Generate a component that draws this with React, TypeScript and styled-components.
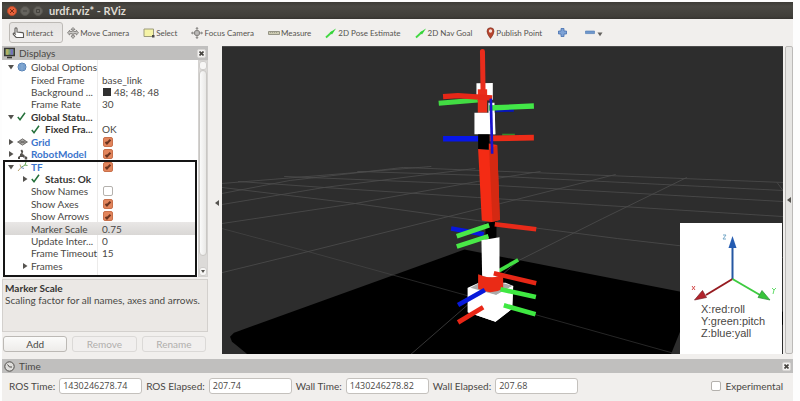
import React from 'react';
import styled, { createGlobalStyle } from 'styled-components';

const GlobalStyle = createGlobalStyle`
  *, *::before, *::after { box-sizing: border-box; }
  body { margin: 0; background: #fdfdfd; color: #4a4845; font-family: Lato, "Open Sans", sans-serif; font-size: 10px; }
  button, input { font: inherit; color: inherit; }
`;

const Window = styled.div`
  display: flex;
  flex-direction: column;
  height: calc(100vh - 2px);
  min-height: 398px;
  margin: 2px 7px 0 2px;
  background: #f1efed;
`;

const TitleBar = styled.header`
  display: flex;
  align-items: center;
  flex: none;
  gap: 3px;
  height: 17px;
  padding: 0 5px;
  background: linear-gradient(#3d3b36, #4a4843 25%, #403e39 85%, #35332f);
`;

const WindowButton = styled.button<{ $close?: boolean }>`
  display: grid;
  place-items: center;
  width: 10px;
  height: 10px;
  padding: 0;
  border: 1px solid ${p => (p.$close ? '#b5492a' : '#57554f')};
  border-radius: 50%;
  background: ${p => (p.$close ? '#e7623b' : '#66645e')};
  color: ${p => (p.$close ? '#7c2a12' : '#45433e')};
  svg { display: block; }
`;

const WindowTitle = styled.h1`
  margin: 0 0 0 3px;
  color: #dfdbd2;
  font-size: 11px;
  line-height: 14px;
  font-weight: 700;
`;

const ToolBar = styled.nav`
  display: flex;
  align-items: center;
  flex: none;
  height: 27px;
  padding: 0 7px;
  font-size: 8px;
`;

const ToolButton = styled.button<{ $active?: boolean; $wide?: boolean }>`
  display: flex;
  align-items: center;
  gap: 1px;
  height: 21px;
  padding: 0 ${p => (p.$active ? '9px 0 2px' : p.$wide ? '8px' : '6px')};
  margin-right: ${p => (p.$active ? '-3px' : '0')};
  border: 1px solid ${p => (p.$active ? '#bdbab6' : 'transparent')};
  border-radius: 3px;
  background: ${p => (p.$active ? 'linear-gradient(#e6e4e2, #eeeceb)' : 'transparent')};
  color: #55534f;
  white-space: nowrap;
  svg { flex: none; }
`;

const Workspace = styled.main`
  display: flex;
  flex: 1;
  min-height: 0;
`;

const SidePanel = styled.section`
  display: flex;
  flex-direction: column;
  flex: 0 0 206px;
  min-width: 0;
`;

const PanelHeader = styled.div`
  display: flex;
  align-items: center;
  flex: none;
  gap: 4px;
  height: 14px;
  padding: 0 2px;
  background: #c0bfbe;
`;

const PanelTitle = styled.h2`
  flex: 1;
  margin: 0;
  font-size: 10px;
  line-height: 14px;
  font-weight: 400;
`;

const CloseButton = styled.button`
  display: grid;
  place-items: center;
  width: 9px;
  height: 9px;
  padding: 0;
  border: 1px solid #d9d7d5;
  border-radius: 2px;
  background: #f3f2f1;
`;

const TreeArea = styled.div`
  display: flex;
  flex: 1;
  min-height: 0;
`;

const Tree = styled.div`
  display: flex;
  flex-direction: column;
  flex: 1;
  min-width: 0;
  padding-top: 1px;
  background: linear-gradient(90deg, #fff 95px, #ecebea 95px, #ecebea 96px, #fff 96px);
`;

const RowGroup = styled.div<{ $rows: number; $framed?: boolean }>`
  display: grid;
  grid-template-rows: repeat(${p => p.$rows}, minmax(0, 1fr));
  flex: ${p => p.$rows};
  min-height: 0;
  padding-bottom: ${p => (p.$framed ? '5px' : '0')};
  margin: 0 1px;
  outline: ${p => (p.$framed ? '2px solid #151515' : 'none')};
  outline-offset: -2px;
`;

const Row = styled.div<{ $selected?: boolean }>`
  display: grid;
  grid-template-columns: 95px 1fr;
  align-items: center;
  min-height: 0;
  margin: 0 2px;
  line-height: 12px;
  background: ${p => (p.$selected ? 'linear-gradient(#e9e7e6, #d9d7d5)' : 'transparent')};
`;

const NameCell = styled.div<{ $level: number }>`
  display: flex;
  align-items: center;
  min-width: 0;
  padding-left: ${p => (p.$level ? '14px' : '0')};
`;

const ArrowSlot = styled.span`
  display: grid;
  place-items: center;
  flex: 0 0 12px;
`;

const IconSlot = styled.span`
  display: flex;
  align-items: center;
  flex: 0 0 14px;
`;

const Name = styled.span<{ $tone?: 'bold' | 'link' }>`
  white-space: nowrap;
  font-weight: ${p => (p.$tone ? 700 : 400)};
  color: ${p => (p.$tone === 'link' ? '#3b74cc' : p.$tone === 'bold' ? '#363432' : 'inherit')};
`;

const ValueCell = styled.div`
  display: flex;
  align-items: center;
  gap: 3px;
  padding-left: 2px;
  white-space: nowrap;
`;

const Swatch = styled.span`
  width: 8px;
  height: 8px;
  margin-left: 1px;
  background: #303030;
`;

const Check = styled.input<{ $inset?: boolean }>`
  appearance: none;
  display: grid;
  place-items: center;
  flex: none;
  width: 10px;
  height: 10px;
  margin: 0 0 0 ${p => (p.$inset ? '1px' : '0')};
  border: 1px solid #b4b1ad;
  border-radius: 2px;
  background: #fff;
  &:checked { border-color: #c9714c; background: #e2855c; }
  &:checked::before {
    content: '';
    width: 6px;
    height: 3px;
    border: solid #6b3420;
    border-width: 0 0 2px 2px;
    rotate: -45deg;
  }
`;

const ScrollBar = styled.div`
  display: flex;
  flex-direction: column;
  align-items: center;
  flex: 0 0 10px;
  background: #dcdad8;
  border: 1px solid #d4d2d0;
`;

const ScrollEnd = styled.button`
  display: grid;
  place-items: center;
  width: 8px;
  height: 9px;
  padding: 0;
  border: 1px solid #cfcdcb;
  border-radius: 3px;
  background: #f7f6f5;
`;

const Thumb = styled.div<{ $share: number }>`
  width: 8px;
  flex: ${p => p.$share};
  border: 1px solid #c9c7c4;
  border-radius: 4px;
  background: linear-gradient(90deg, #fafafa, #e9e8e6);
`;

const ScrollGap = styled.div`flex: 6;`;

const Description = styled.div`
  flex: none;
  height: 53px;
  margin-top: 2px;
  padding: 2px 2px;
  border: 1px solid #d3d0cd;
  background: #ebe8e5;
  line-height: 12px;
  white-space: nowrap;
  p { margin: 0; }
`;

const DescriptionTitle = styled.h3`
  margin: 0;
  font-size: 10px;
  line-height: 12px;
  color: #363432;
`;

const ButtonRow = styled.div`
  display: grid;
  grid-template-columns: repeat(3, 1fr);
  flex: none;
  gap: 5px;
  padding: 4px 2px 7px 1px;
`;

const PushButton = styled.button`
  height: 16px;
  padding: 0;
  border: 1px solid #bcb9b5;
  border-radius: 3px;
  background: linear-gradient(#fbfbfa, #eeecea);
  line-height: 14px;
  &:disabled { color: #b0aeac; border-color: #dbd9d7; background: #f1efee; }
`;

const Splitter = styled.div`
  display: grid;
  align-content: center;
  justify-items: end;
  flex: 0 0 14px;
  padding: 0 3px;
`;

const EdgeHandle = styled.div`
  display: grid;
  place-items: center;
  flex: none;
  width: 8px;
  margin: 0 0 5px 2px;
  border: 1px solid #bcbab8;
  border-radius: 2px;
  background: #e6e5e3;
`;

const Viewport = styled.section`
  position: relative;
  flex: 1;
  min-width: 0;
  margin-bottom: 5px;
  border-top: 1px solid #4b4b4b;
  background: #2d2d2d;
`;

const Scene = styled.svg`
  position: absolute;
  inset: 0;
  width: 100%;
  height: 100%;
`;

const Legend = styled.figure`
  position: absolute;
  right: 1px;
  bottom: 0;
  width: 102px;
  margin: 0;
  padding: 9px 0 15px;
  background: #fff;
  svg { display: block; }
`;

const LegendText = styled.figcaption`
  padding-left: 21px;
  font: 11px/12px "Liberation Sans", Arial, sans-serif;
`;

const TimeForm = styled.form`
  display: flex;
  align-items: center;
  flex: none;
  gap: 4px;
  height: 28px;
  padding: 0 10px 3px 7px;
`;

const FieldInput = styled.input`
  width: 83px;
  min-width: 0;
  height: 16px;
  padding: 0 3px;
  border: 1px solid #c4c1bd;
  border-radius: 3px;
  background: #fff;
  font-family: "Open Sans", sans-serif;
  font-size: 9px;
`;

const FieldLabel = styled.label`white-space: nowrap;`;
const Spacer = styled.div`flex: 1;`;

const Triangle = ({ open }: { open?: boolean }) => (
  <svg width="6" height="6" viewBox="0 0 6 6" fill="#55534f"><path d={open ? 'M0 1h6L3 5.5z' : 'M1 0v6L5.5 3z'} /></svg>
);
const HandleArrow = () => <svg width="4" height="6" viewBox="0 0 4 6"><path d="M4 0v6L0 3z" fill="#55534f" /></svg>;
const CloseMark = () => <svg width="5" height="5" viewBox="0 0 5 5"><path d="M.5.5l4 4m0-4l-4 4" stroke="#45433f" strokeWidth="1.6" /></svg>;
const Tick = () => <svg width="9" height="9" viewBox="0 0 9 9"><path d="M.8 5L3 7.7 8 .8" fill="none" stroke="#24703a" strokeWidth="1.5" /></svg>;

const icons: Record<string, React.ReactNode> = {
  hand: <svg width="13" height="12" viewBox="0 0 13 12"><path d="M3 6V1.7a1 1 0 012 0V5l5.5.6q1 .2 1 1.2v3.7H4.2L1.3 7.4Q.8 6.2 2 6.1l2 1.4" fill="#fff" stroke="#5b5956" strokeWidth="1.1" /></svg>,
  move: <svg width="12" height="12" viewBox="0 0 12 12"><path d="M6 .5l2 2H6.7v2h2.6V3.2L11.5 6 9.3 8V6.6H6.7V9H8l-2 2.5L4 9h1.3V6.6H2.7V8L.5 6l2.2-2.8v1.3h2.6v-2H4z" fill="#c9c8c5" stroke="#777572" strokeWidth=".8" /></svg>,
  select: <svg width="12" height="12" viewBox="0 0 12 12"><path d="M1 2h9.5v7.5H1z" fill="#f5f3a6" stroke="#9c9b7b" /><path d="M9 8h2.500v2.500H9z" fill="#4b4948" /></svg>,
  focus: <svg width="12" height="12" viewBox="0 0 12 12" stroke="#858380" fill="none"><circle cx="6" cy="6" r="2.7" fill="#bcbab8" /><path d="M6 .3v4M6 7.7v4M.3 6h4M7.7 6h4M4.8 2L6 .7 7.2 2M4.8 10L6 11.3 7.2 10M2 4.8L.7 6 2 7.2M10 4.8L11.3 6 10 7.2" /></svg>,
  measure: <svg width="12" height="12" viewBox="0 0 12 12"><path d="M.5 4.5h11v3H.5z" fill="#cdcbb2" stroke="#969586" /><path d="M2.5 5v1M4.5 5v1M6.5 5v1M8.5 5v1" stroke="#85847a" strokeWidth=".6" /></svg>,
  arrow: <svg width="12" height="12" viewBox="0 0 12 12"><path d="M1 10.5L7 5" stroke="#42d842" strokeWidth="1.8" /><path d="M4.700 5.500L11 1.500 7 7.500z" fill="#36d438" /></svg>,
  pin: <svg width="9" height="12" viewBox="0 0 9 12"><path d="M4.5 11.5Q1 7 1 4.2a3.5 3.5 0 017 0Q8 7 4.5 11.5z" fill="#b8452f" stroke="#7b2c1d" strokeWidth=".6" /><circle cx="4.5" cy="4" r="1.7" fill="#f7ded7" /></svg>,
  plus: <svg width="9" height="9" viewBox="0 0 9 9"><path d="M3 .5h3V3h2.5v3H6v2.5H3V6H.5V3H3z" fill="#7ea2d5" stroke="#456fb0" strokeWidth=".8" /></svg>,
  minus: <svg width="18" height="9" viewBox="0 0 18 9"><path d="M.5 3h9v2.6h-9z" fill="#6f97cc" stroke="#4e78b2" strokeWidth=".6" /><path d="M12.5 4.5h5L15 8.3z" fill="#64625f" /></svg>,
  globe: <svg width="10" height="10" viewBox="0 0 10 10"><circle cx="5" cy="5" r="4" fill="#6f9acb" stroke="#5883b6" /><path d="M1 5h8M5 1v8M2 2.7Q5 4 8 2.7M2 7.3Q5 6 8 7.3" fill="none" stroke="#91b2d6" strokeWidth=".6" /></svg>,
  grid: <svg width="11" height="8" viewBox="0 0 11 8"><path d="M.7 4l4.8-3.2L10.3 4 5.5 7.2zM3 2.4l5 3.2M8 2.4L3 5.6M.7 4h9.6" fill="#aaa8a5" stroke="#6e6c69" strokeWidth=".9" /></svg>,
  robot: <svg width="11" height="11" viewBox="0 0 11 11"><path d="M3.5 1.5L5 .5l1.2 1.8L5.5 5l2 1V8H3V5l1.5-1zM1 8l2-1.5V10H1zM7.7 7l2.5 1v2.5H7.7z" fill="#55534f" /><path d="M6 8.5h2" stroke="#9997a0" /></svg>,
  tf: <svg width="11" height="11" viewBox="0 0 11 11" fill="none"><path d="M4 6.5L1 10M4 6.5l-1-3" stroke="#b8a16d" /><path d="M4 6.5L8 4l1-3M8 4l2.5.5" stroke="#67a45b" /><path d="M4 6.5l3 1" stroke="#7691c2" /></svg>,
};

const tools: [string, string][] = [
  ['hand', 'Interact'], ['move', 'Move Camera'], ['select', 'Select'], ['focus', 'Focus Camera'], ['measure', 'Measure'],
  ['arrow', '2D Pose Estimate'], ['arrow', '2D Nav Goal'], ['pin', 'Publish Point'],
];

type Item = {
  name: string;
  level?: number;
  open?: boolean;
  icon?: string;
  tone?: 'bold' | 'link';
  value?: string | boolean;
  swatch?: boolean;
  selected?: boolean;
};

const topItems: Item[] = [
  { name: 'Global Options', open: true, icon: 'globe' },
  { name: 'Fixed Frame', level: 1, value: 'base_link' },
  { name: 'Background ...', level: 1, value: '48; 48; 48', swatch: true },
  { name: 'Frame Rate', level: 1, value: '30' },
  { name: 'Global Statu...', open: true, icon: 'tick', tone: 'bold' },
  { name: 'Fixed Fra...', level: 1, icon: 'tick', tone: 'bold', value: 'OK' },
  { name: 'Grid', open: false, icon: 'grid', tone: 'link', value: true },
  { name: 'RobotModel', open: false, icon: 'robot', tone: 'link', value: true },
];

const tfItems: Item[] = [
  { name: 'TF', open: true, icon: 'tf', tone: 'link', value: true },
  { name: 'Status: Ok', level: 1, open: false, icon: 'tick', tone: 'bold' },
  { name: 'Show Names', level: 1, value: false },
  { name: 'Show Axes', level: 1, value: true },
  { name: 'Show Arrows', level: 1, value: true },
  { name: 'Marker Scale', level: 1, value: '0.75', selected: true },
  { name: 'Update Inter...', level: 1, value: '0' },
  { name: 'Frame Timeout', level: 1, value: '15' },
  { name: 'Frames', level: 1, open: false },
];

const TreeRow = ({ item }: { item: Item }) => (
  <Row $selected={item.selected} role="treeitem" aria-expanded={item.open} aria-level={(item.level ?? 0) + 1}>
    <NameCell $level={item.level ?? 0}>
      <ArrowSlot>{item.open !== undefined && <Triangle open={item.open} />}</ArrowSlot>
      {item.icon && <IconSlot>{item.icon === 'tick' ? <Tick /> : icons[item.icon]}</IconSlot>}
      <Name $tone={item.tone}>{item.name}</Name>
    </NameCell>
    <ValueCell>
      {item.swatch && <Swatch />}
      {typeof item.value === 'boolean'
        ? <Check $inset type="checkbox" defaultChecked={item.value} aria-label={item.name} />
        : item.value}
    </ValueCell>
  </Row>
);

const SceneDrawing = () => (
  <Scene viewBox="222 46 560 308" preserveAspectRatio="xMidYMid slice" aria-label="Robot arm with coordinate frames">
    <path d="M230 336l4-4 230-83 318 62v43H248l-16-13z" fill="#000" />
    <path d="M670 354l12-30h100v30z" fill="#2d2d2d" />
    <g fill="none" stroke="#555" strokeWidth=".8" opacity=".8">
      <path d="M222 272L308 251 500 203 615 174" />
      <path d="M222 223L355 203 477 181 540 171" />
      <path d="M222 204L324 187 475 168" />
      <path d="M222 193L290 180 403 167" />
      <path d="M222 183L431 166" />
      <path d="M410 354L518 260 602 218 686 177" />
      <path d="M222 228L308 251 467 295 671 352" opacity=".7" />
      <path d="M222 187L355 203 477 220 617 238 782 257" />
      <path d="M238 181L324 187 477 197 782 216" />
      <path d="M284 176L477 184 782 201" />
      <path d="M357 171L482 175 782 190" />
      <path d="M403 167L782 182" />
      <path d="M776 182l6 8" />
    </g>
    <g transform="translate(420 44) scale(.3333)">
      <path d="M168 117l49-1v50h-49zM204 175h18l2 95h-20z" fill="#fff" />
      <path d="M55 177L172 167" stroke="#42dc43" strokeWidth="15" />
      <path d="M172 135h28v70h-28z" fill="#ec2f1a" />
      <path d="M162 205h44v65h-44zM216 205h7l2 65h-7z" fill="#fff" />
      <path d="M186 22L188 155" stroke="#e92c1c" strokeWidth="15" strokeLinecap="round" />
      <path d="M225 200l55-2" stroke="#0716b8" strokeWidth="8" />
      <path d="M205 191L340 185" stroke="#42e747" strokeWidth="16" />
      <path d="M68 157L112 154 215 161" fill="none" stroke="#e52717" strokeWidth="16" />
      <path d="M68 283H178" stroke="#0716e8" strokeWidth="17" />
      <path d="M245 271h38" stroke="#34882a" strokeWidth="6" />
      <path d="M173 270h34v45h-34z" fill="#000" />
      <path d="M173 314l32 3V297l25 5 8 224-22 7-32-5z" fill="#f42b14" />
      <path d="M206 315l24-13 8 224-22 7z" fill="#d42912" />
      <path d="M208 282L340 280" stroke="#ed2c18" strokeWidth="17" />
      <path d="M211 163L215 328" stroke="#1913cd" strokeWidth="8" />
    </g>
    <g transform="translate(420 195) scale(.3333)">
      <path d="M92 99L190 116" stroke="#0817df" strokeWidth="14" />
      <path d="M195 82l33-4v46l-10 8-23-4z" fill="#000" />
      <path d="M109 122L206 89M109 153L204 122" stroke="#49e947" strokeWidth="14" />
      <path d="M223 86L347 101" stroke="#e82a19" strokeWidth="14" />
      <path d="M142 276l33-15h80l23 10-3 68-50 39-83-28z" fill="#fff" />
      <path d="M150 276l26-14h70l31 8-50 28z" fill="#aaa" />
      <path d="M142 277l85 22 51-29-3 69-50 39-83-28z" fill="#fff" />
      <path d="M235 226L293 193" stroke="#42df43" strokeWidth="11" />
      <path d="M173 236q37 17 75 0v43q-38 21-75 0z" fill="#ea2b16" />
      <path d="M183 134l54-9v115q-25 10-52 0z" fill="#fff" />
      <path d="M220 233L347 263" stroke="#e62716" strokeWidth="14" />
      <path d="M240 281L346 304M250 329L345 356" stroke="#3fe842" strokeWidth="14" />
      <path d="M113 328L193 283" stroke="#0719da" strokeWidth="14" />
      <path d="M113 380L188 335" stroke="#e92616" strokeWidth="14" />
    </g>
  </Scene>
);

const AxesDrawing = () => (
  <svg width="102" height="71" viewBox="0 0 102 71" fill="none">
    <path d="M52.5 47V14" stroke="#2557a2" strokeWidth="2" />
    <path d="M52.5 47L26 63" stroke="#961b20" strokeWidth="2" />
    <path d="M52.5 47L80 63" stroke="#3ecb40" strokeWidth="2" />
    <path d="M52.5 4l4 12h-8z" fill="#245bb1" />
    <path d="M14.5 68l8-9.500 4 7z" fill="#b3232b" stroke="#762026" strokeWidth=".7" />
    <path d="M90 68l-8-9.500-4 7z" fill="#38c43b" stroke="#2a8c36" strokeWidth=".7" />
    <path d="M43 3h3l-3 4h3" stroke="#75a7c7" />
    <path d="M12 54l3 4m0-4l-3 4" stroke="#d34a4a" />
    <path d="M92 56l2 2 2-2m-2 2l-1 4" stroke="#63dc69" />
  </svg>
);

const timeFields = [
  ['ROS Time:', '1430246278.74'], ['ROS Elapsed:', '207.74'], ['Wall Time:', '1430246278.82'], ['Wall Elapsed:', '207.68'],
];

export default function App() {
  return (
    <>
      <GlobalStyle />
      <Window>
        <TitleBar>
          <WindowButton $close aria-label="Close window"><svg width="4" height="4" viewBox="0 0 4 4"><path d="M0 0l4 4m0-4L0 4" stroke="currentColor" /></svg></WindowButton>
          <WindowButton aria-label="Minimize window"><svg width="4" height="4" viewBox="0 0 4 4"><path d="M0 2h4" stroke="currentColor" /></svg></WindowButton>
          <WindowButton aria-label="Maximize window"><svg width="4" height="4" viewBox="0 0 4 4"><path d="M.5.5h3v3h-3z" fill="none" stroke="currentColor" /></svg></WindowButton>
          <WindowTitle>urdf.rviz* - RViz</WindowTitle>
        </TitleBar>
        <ToolBar aria-label="Tools">
          {tools.map(([icon, label], i) => <ToolButton key={label} $active={i === 0}>{icons[icon]}{label}</ToolButton>)}
          <ToolButton $wide aria-label="Add tool">{icons.plus}</ToolButton>
          <ToolButton $wide aria-label="Remove tool">{icons.minus}</ToolButton>
        </ToolBar>
        <Workspace>
          <SidePanel>
            <PanelHeader>
              <svg width="11" height="12" viewBox="0 0 11 12"><path d="M.7 1.500h9.600v7H.7z" fill="#79a47a" stroke="#383735" strokeWidth="1.400" /><path d="M2 2.200h2.500v5.600H2z" fill="#b3b063" /><path d="M6.500 2.200H9v5.600H6.500z" fill="#7671bd" /><path d="M3 10.500h5" stroke="#383735" strokeWidth="1.600" /></svg>
              <PanelTitle>Displays</PanelTitle>
              <CloseButton aria-label="Close Displays"><CloseMark /></CloseButton>
            </PanelHeader>
            <TreeArea>
              <Tree role="tree">
                <RowGroup role="group" $rows={8}>{topItems.map(i => <TreeRow key={i.name} item={i} />)}</RowGroup>
                <RowGroup role="group" $rows={9} $framed>{tfItems.map(i => <TreeRow key={i.name} item={i} />)}</RowGroup>
              </Tree>
              <ScrollBar>
                <ScrollEnd aria-label="Scroll up" />
                <Thumb $share={100} />
                <ScrollGap />
                <ScrollEnd aria-label="Scroll down"><svg width="4" height="3" viewBox="0 0 4 3"><path d="M0 0h4L2 3z" fill="#55534f" /></svg></ScrollEnd>
              </ScrollBar>
            </TreeArea>
            <Description>
              <DescriptionTitle>Marker Scale</DescriptionTitle>
              <p>Scaling factor for all names, axes and arrows.</p>
            </Description>
            <ButtonRow>
              <PushButton>Add</PushButton>
              <PushButton disabled>Remove</PushButton>
              <PushButton disabled>Rename</PushButton>
            </ButtonRow>
          </SidePanel>
          <Splitter><HandleArrow /></Splitter>
          <Viewport>
            <SceneDrawing />
            <Legend>
              <AxesDrawing />
              <LegendText>X:red:roll<br />Y:green:pitch<br />Z:blue:yall</LegendText>
            </Legend>
          </Viewport>
          <EdgeHandle><HandleArrow /></EdgeHandle>
        </Workspace>
        <PanelHeader>
          <svg width="11" height="11" viewBox="0 0 11 11" fill="none" stroke="#4b4946"><circle cx="5.500" cy="5.500" r="4.700" fill="#dedddb" /><path d="M3.500 3.500l2 2.500h2.500" /></svg>
          <PanelTitle>Time</PanelTitle>
          <CloseButton aria-label="Close Time"><CloseMark /></CloseButton>
        </PanelHeader>
        <TimeForm>
          {timeFields.map(([label, value]) => (
            <React.Fragment key={label}>
              <FieldLabel htmlFor={label}>{label}</FieldLabel>
              <FieldInput id={label} defaultValue={value} />
            </React.Fragment>
          ))}
          <Spacer />
          <Check type="checkbox" id="experimental" />
          <FieldLabel htmlFor="experimental">Experimental</FieldLabel>
        </TimeForm>
      </Window>
    </>
  );
}
